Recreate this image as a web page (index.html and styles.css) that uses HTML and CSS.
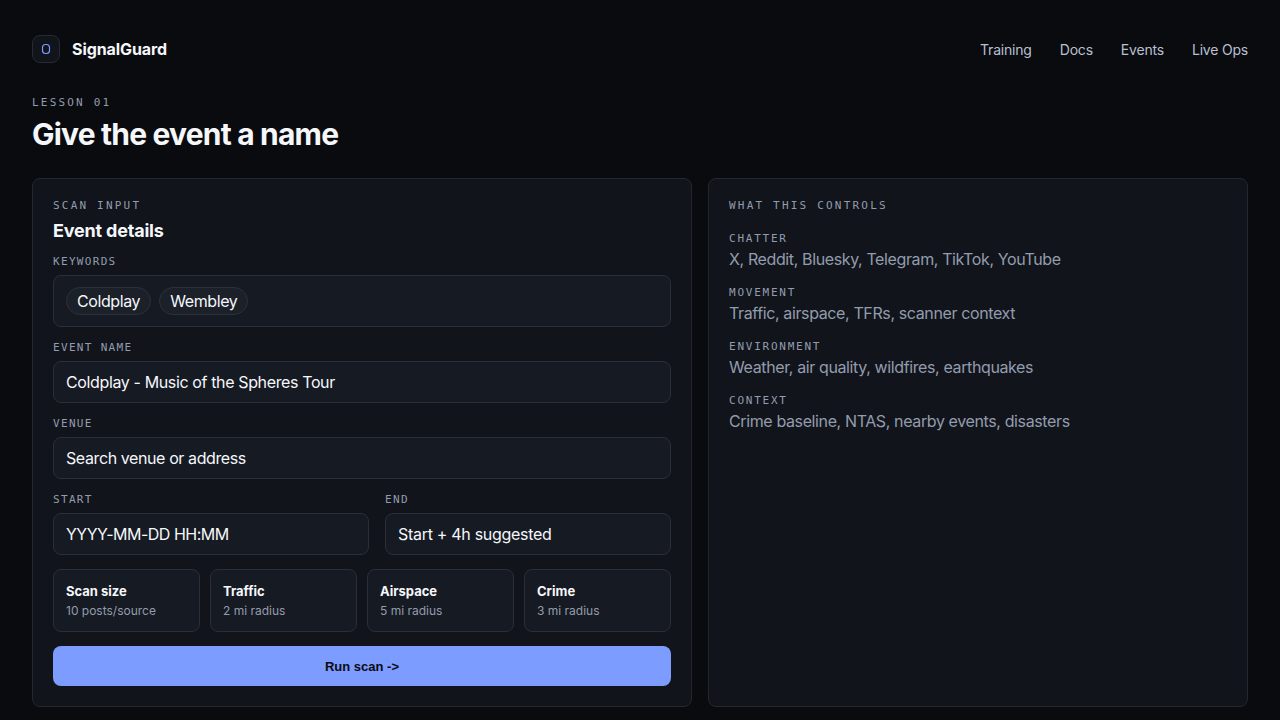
FILE: index.html
```html
<!DOCTYPE html>
<html lang="en">
<head>
    <meta charset="UTF-8">
    <meta name="viewport" content="width=device-width, initial-scale=1.0">
    <title>SignalGuard - Give the event a name</title>
    <link rel="stylesheet" href="styles.css">
</head>
<body>
    <header class="topbar">
        <div class="brand">
            <span class="brand-mark">
                <svg width="10" height="12" viewBox="0 0 10 12" fill="none" stroke="#7c9cff" stroke-width="1.15">
                    <rect x="1.5" y="1.5" width="7" height="9" rx="3"/>
                </svg>
            </span>
            <span class="brand-name">SignalGuard</span>
        </div>
        <nav class="nav">
            <a href="#">Training</a>
            <a href="#">Docs</a>
            <a href="#">Events</a>
            <a href="#">Live Ops</a>
        </nav>
    </header>

    <div class="kicker">LESSON 01</div>
    <h1>Give the event a name</h1>

    <main class="layout">
        <!-- Scan form -->
        <section class="card">
            <div class="kicker">SCAN INPUT</div>
            <h2>Event details</h2>

            <div class="form">
                <div class="field">
                    <div class="label">KEYWORDS</div>
                    <div class="input chips">
                        <span class="chip">Coldplay</span>
                        <span class="chip">Wembley</span>
                    </div>
                </div>
                <div class="field">
                    <div class="label">EVENT NAME</div>
                    <div class="input input-name">Coldplay - Music of the Spheres Tour</div>
                </div>
                <div class="field">
                    <div class="label">VENUE</div>
                    <div class="input">Search venue or address</div>
                </div>
                <div class="dates">
                    <div class="field">
                        <div class="label">START</div>
                        <div class="input input-date">YYYY-MM-DD HH:MM</div>
                    </div>
                    <div class="field">
                        <div class="label">END</div>
                        <div class="input input-end">Start + 4h suggested</div>
                    </div>
                </div>
                <div class="stats">
                    <div class="stat"><strong>Scan size</strong><span>10 posts/source</span></div>
                    <div class="stat"><strong>Traffic</strong><span>2 mi radius</span></div>
                    <div class="stat"><strong>Airspace</strong><span>5 mi radius</span></div>
                    <div class="stat"><strong>Crime</strong><span>3 mi radius</span></div>
                </div>
                <button class="run-btn" type="button">Run scan -&gt;</button>
            </div>
        </section>

        <!-- Data sources -->
        <section class="card">
            <div class="kicker">WHAT THIS CONTROLS</div>
            <dl class="controls">
                <div>
                    <dt>CHATTER</dt>
                    <dd>X, Reddit, Bluesky, Telegram, TikTok, YouTube</dd>
                </div>
                <div>
                    <dt>MOVEMENT</dt>
                    <dd>Traffic, airspace, TFRs, scanner context</dd>
                </div>
                <div>
                    <dt>ENVIRONMENT</dt>
                    <dd>Weather, air quality, wildfires, earthquakes</dd>
                </div>
                <div>
                    <dt>CONTEXT</dt>
                    <dd>Crime baseline, NTAS, nearby events, disasters</dd>
                </div>
            </dl>
        </section>
    </main>
</body>
</html>
```
FILE: styles.css
```css
* {
    box-sizing: border-box;
}

body {
    margin: 0;
    padding: 35px 32px 13px;
    background-color: #0a0b0f;
    color: #f5f7fb;
    font-family: Inter, "Liberation Sans", sans-serif;
    font-size: 16px;
}

.topbar {
    display: flex;
    align-items: center;
    justify-content: space-between;
    height: 28px;
    margin-bottom: 33px;
}

.brand {
    display: flex;
    align-items: center;
    gap: 12px;
}

.brand-mark {
    display: flex;
    align-items: center;
    justify-content: center;
    width: 28px;
    height: 28px;
    background-color: #11141b;
    border: 1px solid #252a34;
    border-radius: 8px;
}

.brand-name {
    font-weight: 700;
    letter-spacing: -0.08px;
}

.nav {
    display: flex;
    gap: 28px;
}

.nav a {
    color: #b8c0cf;
    font-size: 14px;
    letter-spacing: -0.2px;
    text-decoration: none;
}

.kicker,
.label,
.controls dt {
    color: #939cad;
    font-family: "DejaVu Sans Mono", monospace;
    font-size: 11px;
    line-height: 13px;
}

.kicker {
    letter-spacing: 0.2em;
}

.label {
    letter-spacing: 0.12em;
}

h1 {
    margin: 6px 0 25px;
    font-size: 30px;
    font-weight: 700;
    line-height: 38px;
    letter-spacing: -0.8px;
}

h2 {
    margin: 8px 0 13px;
    font-size: 18px;
    font-weight: 700;
    line-height: 22px;
    letter-spacing: -0.2px;
}

.layout {
    display: grid;
    grid-template-columns: 1.1fr 0.9fr;
    gap: 16px;
}

.card {
    padding: 20px;
    background-color: #11141b;
    border: 1px solid #222731;
    border-radius: 8px;
}

.form {
    display: flex;
    flex-direction: column;
    gap: 14px;
}

.field {
    display: flex;
    flex-direction: column;
    gap: 7px;
}

.input {
    height: 42px;
    padding: 0 12px;
    background-color: #161a22;
    border: 1px solid #292e38;
    border-radius: 8px;
    line-height: 40px;
    letter-spacing: -0.4px;
    white-space: nowrap;
}

.input-name {
    letter-spacing: -0.37px;
}

.input-date {
    letter-spacing: -0.5px;
}

.input-end {
    letter-spacing: -0.3px;
}

.chips {
    display: flex;
    align-items: center;
    gap: 8px;
    height: 52px;
}

.chip {
    height: 28px;
    padding: 0 10px;
    background-color: #1b2029;
    border: 1px solid #2b313d;
    border-radius: 14px;
    line-height: 26px;
}

.dates {
    display: grid;
    grid-template-columns: 316fr 286fr;
    gap: 16px;
}

.stats {
    display: grid;
    grid-template-columns: repeat(4, 1fr);
    gap: 10px;
}

.stat {
    display: flex;
    flex-direction: column;
    gap: 2px;
    padding: 12px 12px 11px;
    background-color: #161a22;
    border: 1px solid #292e38;
    border-radius: 8px;
    line-height: 18px;
}

.stat strong {
    font-size: 13px;
}

.stat span {
    color: #939cad;
    font-size: 12px;
}

.run-btn {
    height: 40px;
    background-color: #7c9cff;
    border: none;
    border-radius: 8px;
    color: #0a0b0f;
    font-family: Arial, "Liberation Sans", sans-serif;
    font-size: 13px;
    font-weight: 700;
    cursor: pointer;
}

.controls {
    display: flex;
    flex-direction: column;
    gap: 17px;
    margin: 20px 0 0;
}

.controls dt {
    letter-spacing: 0.16em;
}

.controls dd {
    margin: 4px 0 0;
    color: #939cad;
    line-height: 20px;
    letter-spacing: -0.38px;
}
```
